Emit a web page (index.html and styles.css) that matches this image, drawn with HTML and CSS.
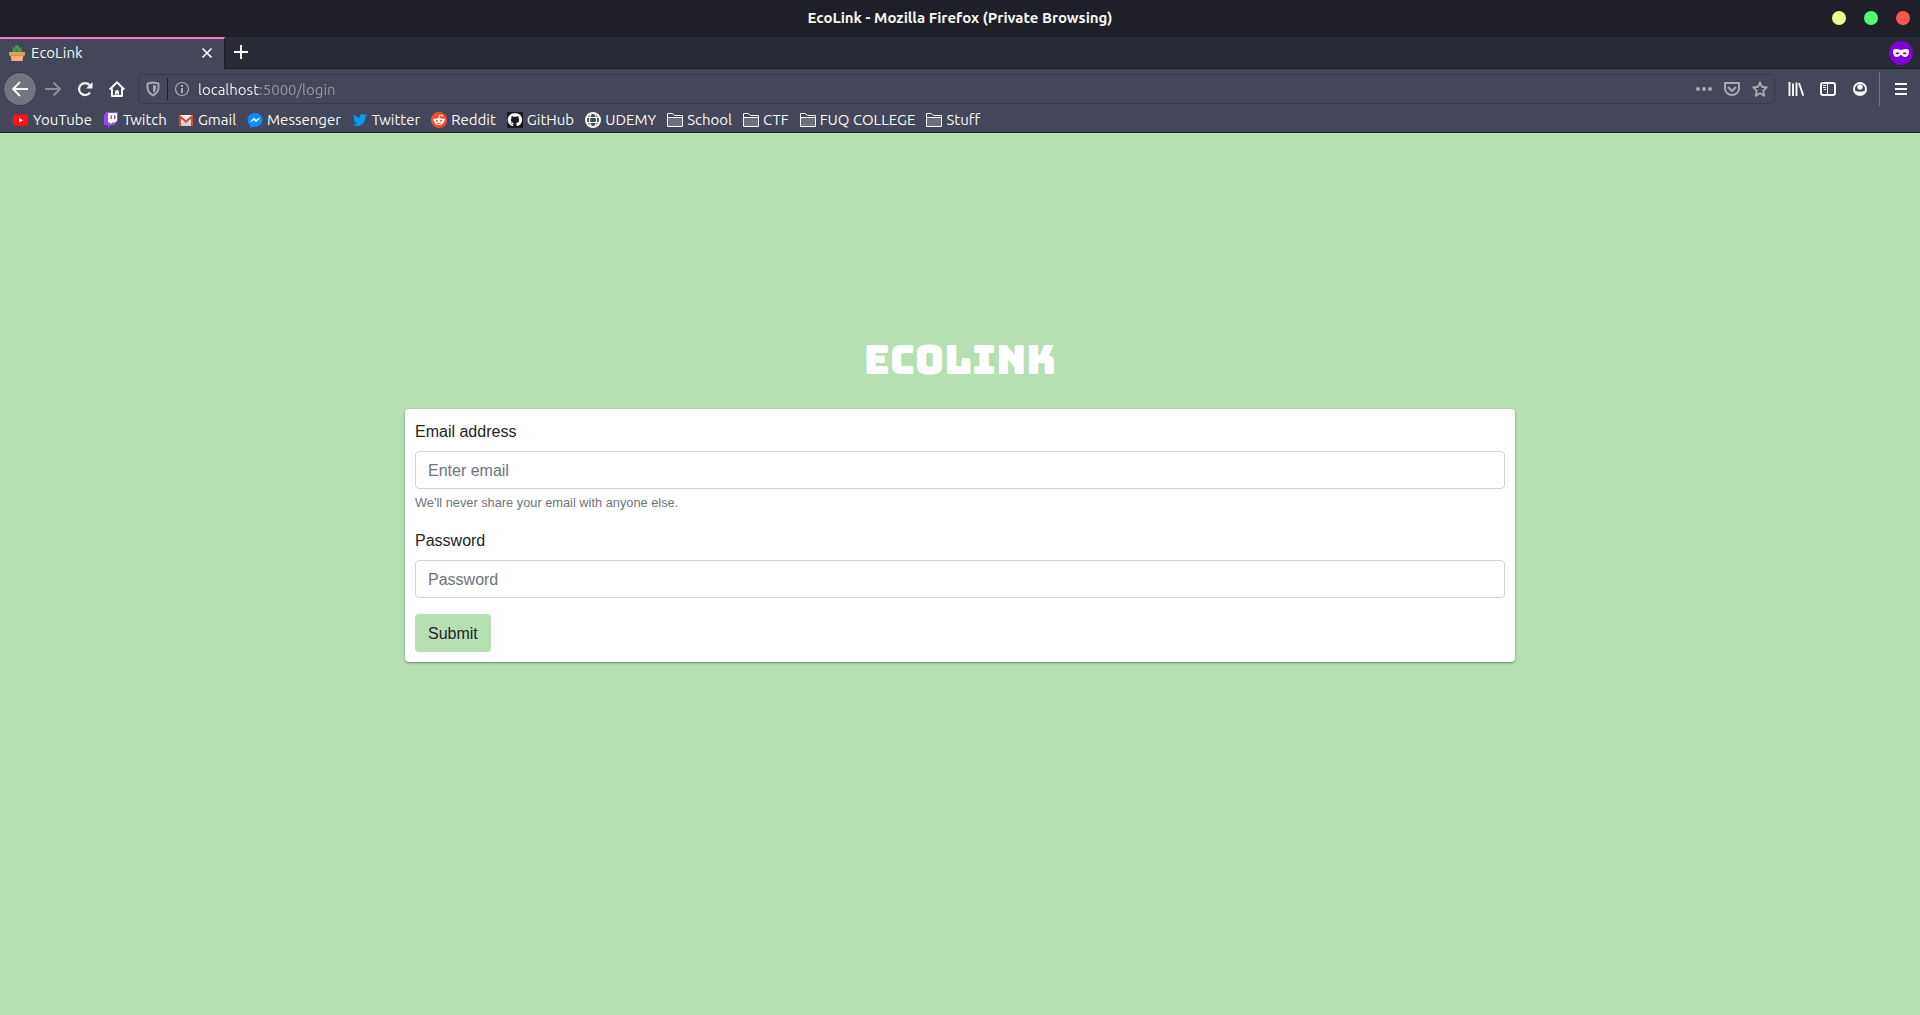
FILE: index.html
```html
<!DOCTYPE html>
<html lang="en">

<head>
    <meta charset="UTF-8">
    <meta name="viewport" content="width=device-width, initial-scale=1.0">
    <title>EcoLink</title>
    <link rel="stylesheet" href="styles.css">
</head>

<body>
    <header class="browser">
        <div class="titlebar">
            <span class="window-title">EcoLink - Mozilla Firefox (Private Browsing)</span>
            <div class="window-buttons">
                <button class="dot yellow" aria-label="Minimize"></button>
                <button class="dot green" aria-label="Maximize"></button>
                <button class="dot red" aria-label="Close window"></button>
            </div>
        </div>

        <div class="tabs">
            <div class="tab">
                <svg class="icon" viewBox="0 0 16 16">
                    <path d="M6 7.500 3 6V4.500L4.500 5 3 2l3 1V1l2-1 2 1v2l3-1-1.500 3 1.500-.500V6l-3 1.500z" fill="#4f9a3f" />
                    <path d="M7 7 6.500 3 8 5l1.500-2L9 7z" fill="#377a35" />
                    <path d="M0 7h16v3.500H0z" fill="#e59a69" />
                    <path d="M1.500 10h13L13.500 16h-11z" fill="#f2ae7b" />
                    <path d="M1.500 10h13v1h-13z" fill="#d68c5e" />
                </svg>
                <span class="tab-name">EcoLink</span>
                <button class="tab-close" aria-label="Close tab">
                    <svg class="icon" viewBox="0 0 16 16"><path d="m3.500 3.500 9 9m0-9-9 9" fill="none" stroke="currentColor" stroke-width="1.700" /></svg>
                </button>
            </div>
            <button class="new-tab" aria-label="New tab">
                <svg class="icon" viewBox="0 0 16 16"><path d="M8 1v14M1 8h14" stroke="currentColor" stroke-width="2" /></svg>
            </button>
            <svg class="private" viewBox="0 0 24 24">
                <circle cx="12" cy="12" r="12" fill="#8000d7" />
                <path fill="#fff" fill-rule="evenodd" d="M4 10c0-1.300 1-2 3-2 2.500 0 3.500 1 5 1s2.500-1 5-1c2 0 3 .700 3 2 0 3.500-1.300 6-4 6-2 0-2.700-2-4-2s-2 2-4 2c-2.700 0-4-2.500-4-6zm2.300 2.500c1 1.200 3 1.200 4-.300-1-1.200-3-1.200-4 .300zm7.400-.300c1 1.500 3 1.500 4 .300-1-1.500-3-1.500-4-.300z" />
            </svg>
        </div>

        <nav class="toolbar">
            <button class="tool back" aria-label="Back">
                <svg class="icon" viewBox="0 0 16 16"><path d="M16 8H1.500M8 1 1.200 8 8 15" fill="none" stroke="currentColor" stroke-width="2" /></svg>
            </button>
            <button class="tool faded" aria-label="Forward">
                <svg class="icon" viewBox="0 0 16 16"><path d="M0 8h14.500M8.500 1.500 15 8l-6.500 6.500" fill="none" stroke="currentColor" stroke-width="2" /></svg>
            </button>
            <button class="tool" aria-label="Reload">
                <svg class="icon" viewBox="0 0 16 16">
                    <path d="M13 11.500A6 6 0 1 1 12.500 4" fill="none" stroke="currentColor" stroke-width="2.200" />
                    <path d="M15.500 1v6.500H9z" fill="currentColor" />
                </svg>
            </button>
            <button class="tool" aria-label="Home">
                <svg class="icon" viewBox="0 0 16 16">
                    <path d="M.700 8.500 8 1.300l7.300 7.200M3 7.500V15h10V7.500" fill="none" stroke="currentColor" stroke-width="2" stroke-linejoin="round" />
                    <path d="M6 15v-4a2 2 0 0 1 4 0v4H8.700v-2.500H7.500V15z" fill="currentColor" />
                </svg>
            </button>

            <div class="urlbar">
                <svg class="icon" viewBox="0 0 16 16">
                    <path d="M8 1.500 13.500 2.500v4c0 3.500-2 6-5.500 8-3.500-2-5.500-4.500-5.500-8v-4z" fill="none" stroke="currentColor" stroke-width="2" stroke-linejoin="round" />
                    <path d="M8 4v8c2-1.300 3-3 3-5V4.600z" fill="currentColor" />
                </svg>
                <span class="url-line"></span>
                <svg class="icon" viewBox="0 0 16 16">
                    <circle cx="8" cy="8" r="6.500" fill="none" stroke="currentColor" stroke-width="1.200" />
                    <path d="M7 4h2v2H7zM7 7h2v5H7z" fill="currentColor" />
                </svg>
                <input class="url" type="text" value="localhost:5000/login" aria-label="Address">
                <div class="url-actions">
                    <button aria-label="Page actions">
                        <svg class="icon" viewBox="0 0 16 16" fill="currentColor"><circle cx="2" cy="8" r="2" /><circle cx="8" cy="8" r="2" /><circle cx="14" cy="8" r="2" /></svg>
                    </button>
                    <button aria-label="Save to Pocket">
                        <svg class="icon" viewBox="0 0 16 16" fill="none" stroke="currentColor" stroke-width="2" stroke-linejoin="round"><path d="M1 2h14v5.500a7 6.500 0 0 1-14 0z" /><path d="M4.500 6.500 8 10l3.500-3.500" stroke-linecap="round" /></svg>
                    </button>
                    <button aria-label="Bookmark this page">
                        <svg class="icon" viewBox="0 0 16 16"><path d="m8 1.500 2 4.300 4.800.600-3.500 3.300.900 5L8 12.300l-4.200 2.400.900-5L1.200 6.400 6 5.800z" fill="none" stroke="currentColor" stroke-width="1.900" stroke-linejoin="round" /></svg>
                    </button>
                </div>
            </div>

            <button class="tool" aria-label="Library">
                <svg class="icon" viewBox="0 0 16 16"><path d="M1.500 1v14M5 2.500V15M8.500 1.500V15M11 2l4.300 12.700" fill="none" stroke="currentColor" stroke-width="1.900" /></svg>
            </button>
            <button class="tool" aria-label="Sidebars">
                <svg class="icon" viewBox="0 0 16 16" fill="none" stroke="currentColor"><rect x="1" y="2" width="14" height="12" rx="2" stroke-width="2" /><path d="M7.500 2v12" /><path d="M3 4.500h3M3 6.500h3M4 8.500h2" /></svg>
            </button>
            <button class="tool" aria-label="Account">
                <svg class="icon" viewBox="0 0 16 16"><circle cx="8" cy="8" r="6" fill="none" stroke="currentColor" stroke-width="2" /><circle cx="8" cy="6" r="2.700" fill="currentColor" /><path d="M2 8.500c1.500 3 10.500 3 12 0v2L11 14H5l-3-3.500z" fill="currentColor" /></svg>
            </button>
            <span class="tool-line"></span>
            <button class="tool menu" aria-label="Menu">
                <svg class="icon" viewBox="0 0 16 16"><path d="M2 3h12M2 8h12M2 13h12" stroke="currentColor" stroke-width="2" /></svg>
            </button>
        </nav>

        <nav class="bookmarks">
            <a href="#">
                <svg class="icon" viewBox="0 0 16 16"><rect y="2.500" width="15" height="11.500" rx="3" fill="#f11" /><path d="m6 6 4 2.300-4 2.300z" fill="#fff" /></svg>
                YouTube
            </a>
            <a href="#">
                <svg class="icon" viewBox="0 0 16 16"><path d="M3 0h12v9l-4 4H8l-3 3v-3H1V3z" fill="#9147ff" /><path d="M5 1h9v7.500l-2 2H9.500l-2 2v-2H5z" fill="#fff" /><path d="M7.500 3.500H9V7H7.500zM11 3.500h1.500V7H11z" fill="#9147ff" /></svg>
                Twitch
            </a>
            <a href="#">
                <svg class="icon" viewBox="0 0 16 16"><path d="M1 3h14v11H1z" fill="#eee" /><path d="m1 14 6-6h2l6 6z" fill="#d5d5d5" /><path d="M2 14V4.500l6 5 6-5V14" fill="none" stroke="#d54b3d" stroke-width="2.200" /></svg>
                Gmail
            </a>
            <a href="#">
                <svg class="icon" viewBox="0 0 16 16"><path d="M8 1c4.500 0 7.500 3 7.500 7s-3 7-7.500 7c-.800 0-1.500 0-2.200-.300L3 16v-2.500C1.500 12 .500 10.200.500 8c0-4 3-7 7.500-7z" fill="#0a8cff" /><path d="m3.200 10 3.600-4 2.400 2 3.600-2-3.600 4-2.400-2z" fill="#fff" stroke="#fff" stroke-width=".5" /></svg>
                Messenger
            </a>
            <a href="#">
                <svg class="icon" viewBox="0 0 16 16"><path d="M1 12.500c1.600.1 3-.300 4.200-1.200-1.300-.1-2.300-.900-2.600-2h1.200C2.300 9 1.500 7.800 1.500 6.300l1.200.300C1.400 5.500 1.100 4 1.900 2.600c1.500 1.800 3.400 2.800 5.800 3C7.300 3.700 8.600 2 10.500 2c.8 0 1.600.3 2.100.900.700-.1 1.300-.4 1.900-.7-.2.700-.7 1.300-1.300 1.600l1.700-.5c-.4.600-.900 1.200-1.500 1.600.2 5-3.600 9.100-8.200 9.100-1.500 0-3-.5-4.200-1.500z" fill="#009cf0" /></svg>
                Twitter
            </a>
            <a href="#">
                <svg class="icon" viewBox="0 0 16 16"><circle cx="8" cy="8" r="8" fill="#ff4b23" /><g fill="#fff"><ellipse cx="8" cy="9.500" rx="4.800" ry="3.500" /><circle cx="3.400" cy="7.700" r="1.300" /><circle cx="12.600" cy="7.700" r="1.300" /><circle cx="11.200" cy="3.700" r="1" /></g><path d="m8 6 .6-3 2.600.6" fill="none" stroke="#fff" /><circle cx="6" cy="8.700" r="1" fill="#ff4b23" /><circle cx="10" cy="8.700" r="1" fill="#ff4b23" /><path d="M6 11q2 1 4 0" fill="none" stroke="#ff4b23" /></svg>
                Reddit
            </a>
            <a href="#">
                <svg class="icon" viewBox="0 0 16 16"><path d="M0 0h16v16H0z" fill="#1b1a20" /><path d="M8 1.300a6.500 6.500 0 0 0-2.200 12.800c.4 0 .5-.2.500-.4v-1.200c-1.700.4-2.200-.8-2.500-1.400-.2-.3-.5-.5-.7-.6.8-.3 1.200.3 1.600.9.500.7 1.100.6 1.700.3.1-.4.2-.6.500-.8-1.700-.2-3-.900-3-3.200 0-.7.300-1.300.7-1.800-.2-.6-.1-1.200.1-1.800.6 0 1.200.300 1.800.7 1-.2 2-.2 3 0 .6-.4 1.200-.7 1.800-.7.2.6.300 1.200.1 1.800.4.500.700 1.100.7 1.800 0 2.300-1.300 3-3 3.200.4.300.5.700.5 1.300v1.500c0 .2.1.4.5.4A6.500 6.500 0 0 0 8 1.300z" fill="#fff" /></svg>
                GitHub
            </a>
            <a href="#">
                <svg class="icon" viewBox="0 0 16 16" fill="none" stroke="currentColor" stroke-width="1.200"><circle cx="8" cy="8" r="7" stroke-width="2" /><ellipse cx="8" cy="8" rx="3.500" ry="7" /><path d="M1.500 5.500h13M1.500 10.500h13" /></svg>
                UDEMY
            </a>
            <a href="#">
                <svg class="icon" viewBox="0 0 16 16"><path d="M.500 14.500v-13h5l2 2h8v11z" fill="none" stroke="currentColor" /><path d="M1 6h14v8H1z" fill="#6d6f7c" /><path d="M1 5.500h14" stroke="currentColor" /></svg>
                School
            </a>
            <a href="#">
                <svg class="icon" viewBox="0 0 16 16"><path d="M.500 14.500v-13h5l2 2h8v11z" fill="none" stroke="currentColor" /><path d="M1 6h14v8H1z" fill="#6d6f7c" /><path d="M1 5.500h14" stroke="currentColor" /></svg>
                CTF
            </a>
            <a href="#">
                <svg class="icon" viewBox="0 0 16 16"><path d="M.500 14.500v-13h5l2 2h8v11z" fill="none" stroke="currentColor" /><path d="M1 6h14v8H1z" fill="#6d6f7c" /><path d="M1 5.500h14" stroke="currentColor" /></svg>
                FUQ COLLEGE
            </a>
            <a href="#">
                <svg class="icon" viewBox="0 0 16 16"><path d="M.500 14.500v-13h5l2 2h8v11z" fill="none" stroke="currentColor" /><path d="M1 6h14v8H1z" fill="#6d6f7c" /><path d="M1 5.500h14" stroke="currentColor" /></svg>
                Stuff
            </a>
        </nav>
    </header>

    <main class="container">
        <h1>ECOLINK</h1>
        <form class="card">
            <div class="form-group">
                <label for="email">Email address</label>
                <input type="email" id="email" class="form-control" placeholder="Enter email" aria-describedby="emailHelp">
                <small id="emailHelp">We'll never share your email with anyone else.</small>
            </div>
            <div class="form-group">
                <label for="password">Password</label>
                <input type="password" id="password" class="form-control" placeholder="Password">
            </div>
            <button type="submit" class="btn">Submit</button>
        </form>
    </main>
</body>

</html>
```
FILE: styles.css
```css
* {
    margin: 0;
    padding: 0;
    box-sizing: border-box;
}

body {
    min-height: 100vh;
    background-color: #b7dfb4;
    color: #212529;
    font-family: "Liberation Sans", Arial, sans-serif;
    font-size: 16px;
    line-height: 24px;
}

button {
    border: none;
    background: none;
    color: inherit;
    font: inherit;
}

/* browser window */
.browser {
    background-color: #44475a;
    color: #f8f8f2;
    font-family: Ubuntu, "Noto Sans", sans-serif;
    font-size: 15px;
    border-bottom: 1px solid #1e1f29;
}

.icon {
    display: block;
    width: 16px;
    height: 16px;
    flex-shrink: 0;
}

.titlebar {
    display: grid;
    grid-template-columns: 1fr auto 1fr;
    align-items: center;
    height: 36px;
    padding: 0 10px;
    background-color: #1e1f29;
}

.window-title {
    grid-column: 2;
    font-weight: bold;
}

.window-buttons {
    display: flex;
    justify-content: flex-end;
    gap: 18px;
}

.dot {
    width: 14px;
    height: 14px;
    border-radius: 50%;
}

.yellow {
    background-color: #f1fa8c;
}

.green {
    background-color: #50fa7b;
}

.red {
    background-color: #ff5555;
}

.tabs {
    display: flex;
    align-items: center;
    height: 33px;
    padding-right: 7px;
    background-color: #282a36;
    box-shadow: inset 0 -1px #1b1c25, inset 0 1px #1b1c25;
}

.tab {
    display: flex;
    align-items: center;
    gap: 6px;
    width: 225px;
    height: 32px;
    padding: 0 9px 2px;
    align-self: flex-end;
    background-color: #44475a;
    border-top: 2px solid #ff79c6;
    border-right: 1px solid #1b1c25;
}

.tab-name {
    flex: 1;
}

.new-tab {
    padding: 0 8px 2px;
}

.private {
    width: 24px;
    height: 24px;
    margin-left: auto;
}

.toolbar {
    display: flex;
    align-items: center;
    height: 40px;
    padding: 0 3px 0 4px;
}

.tool {
    display: flex;
    align-items: center;
    justify-content: center;
    width: 32px;
    height: 32px;
    flex-shrink: 0;
}

.back {
    margin-right: 1px;
    border-radius: 50%;
    background-color: #72747f;
    box-shadow: 0 0 0 1px #383a4a;
}

.faded {
    color: #8b8d98;
}

.urlbar {
    display: flex;
    align-items: center;
    flex: 1;
    height: 30px;
    margin: 0 5px;
    padding: 0 6px;
    border: 1px solid #383a4a;
    border-radius: 4px;
    color: #a9aab0;
}

.url-line {
    width: 1px;
    height: 22px;
    margin: 0 6px;
    background-color: #1e1f29;
}

/* the host is bright, the rest of the address is dimmed */
.url {
    flex: 1;
    min-width: 0;
    margin-left: 8px;
    padding-top: 2px;
    border: none;
    outline: none;
    font: inherit;
    color: transparent;
    background-image: linear-gradient(to right, #f8f8f2 61px, #9a9ba4 61px);
    background-clip: text;
    -webkit-background-clip: text;
}

.url-actions {
    display: flex;
    gap: 12px;
}

.tool-line {
    width: 1px;
    height: 34px;
    margin: 0 3px;
    background-color: #72747f;
}

.menu {
    margin-left: 2px;
}

.bookmarks {
    display: flex;
    gap: 11px;
    height: 23px;
    padding: 0 13px;
}

.bookmarks a {
    display: flex;
    align-items: center;
    gap: 4px;
    height: 22px;
    color: inherit;
    text-decoration: none;
    white-space: nowrap;
}

/* login page */
.container {
    width: 100%;
    max-width: 1140px;
    margin: 0 auto;
    padding: 203px 15px 50px;
}

h1 {
    margin-bottom: 25px;
    color: white;
    font-family: Bungee, Inter, sans-serif;
    font-size: 40px;
    font-weight: 500;
    line-height: 48px;
    text-align: center;
}

.card {
    padding: 10px;
    background-color: white;
    border-radius: 4px;
    box-shadow: 0 1px 3px rgba(0, 0, 0, 0.2), 0 1px 2px rgba(0, 0, 0, 0.24);
}

.form-group {
    margin-bottom: 16px;
}

label {
    display: block;
    padding-top: 1px;
    margin-bottom: 7px;
}

.form-control {
    display: block;
    width: 100%;
    height: 38px;
    padding: 7px 12px 5px;
    border: 1px solid #ced4da;
    border-radius: 4px;
    background-color: white;
    font: inherit;
}

.form-control::placeholder {
    color: #6c757d;
}

small {
    display: block;
    margin-top: 4px;
    color: #6c757d;
    font-size: 80%;
    line-height: 19px;
}

.btn {
    display: block;
    height: 38px;
    padding: 1px 13px 0;
    border-radius: 4px;
    background-color: #b7dfb4;
    color: #212529;
}
```
